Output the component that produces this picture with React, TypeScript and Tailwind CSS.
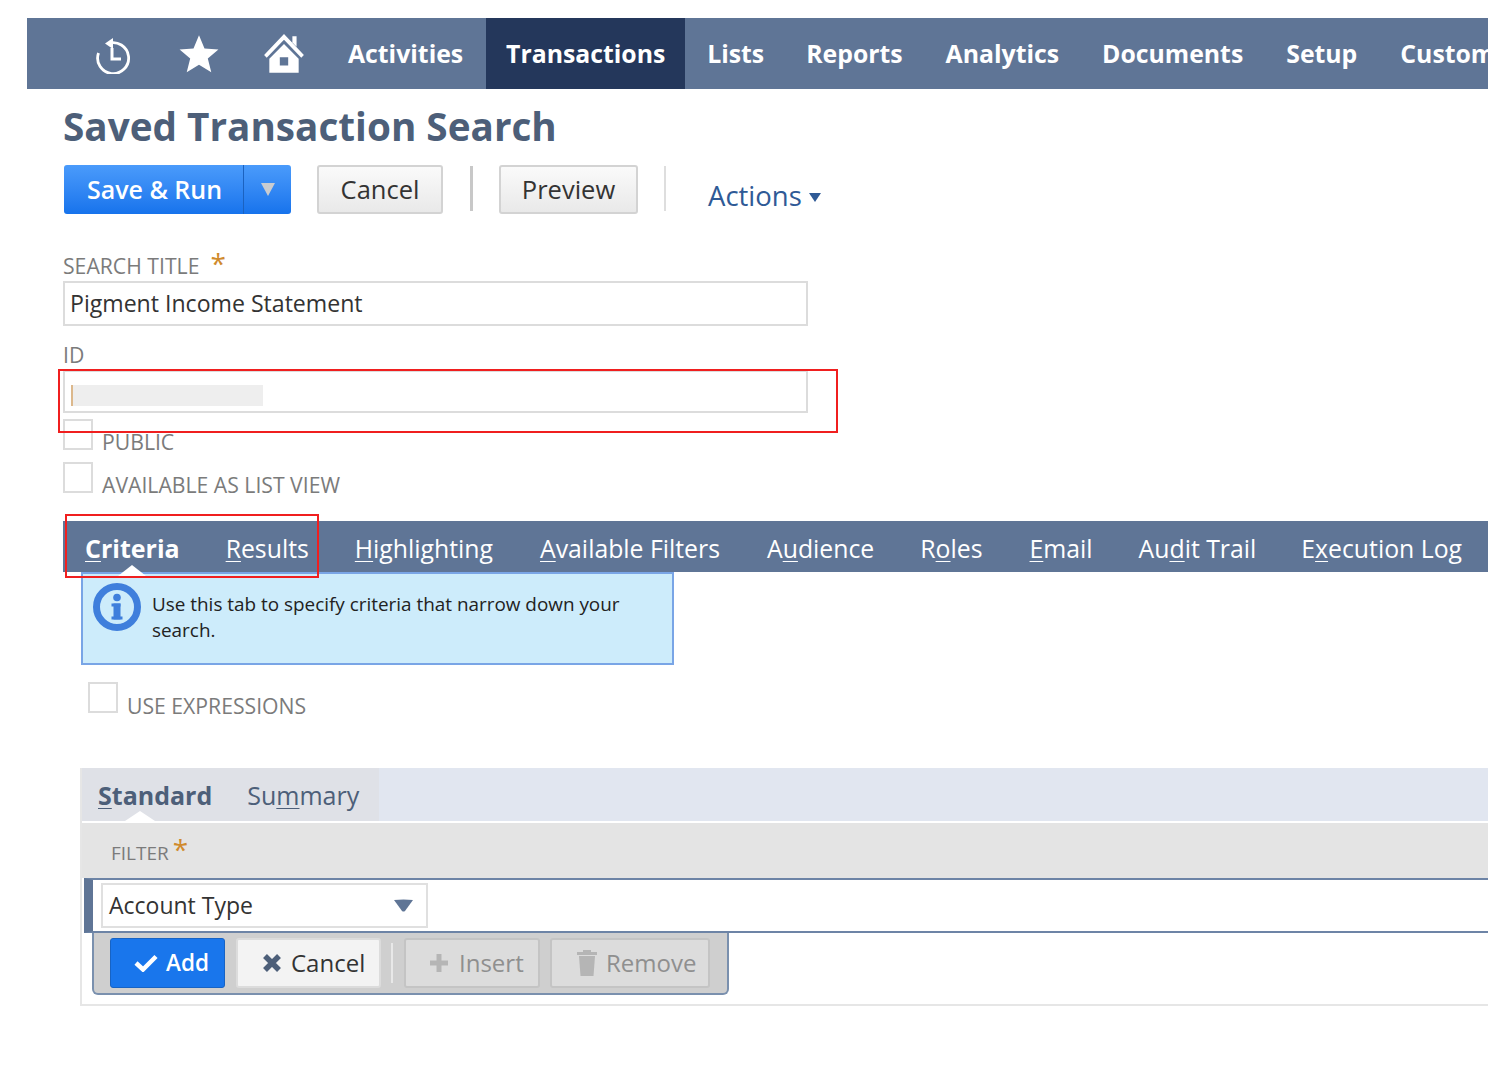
import React from "react";

function U({ children }: { children: React.ReactNode }) {
  return <span className="underline underline-offset-[3px] decoration-1">{children}</span>;
}

function Check({ label, top = "mt-[9px]" }: { label: string; top?: string }) {
  return (
    <div className="flex items-start h-[32px]">
      <div className="w-[30px] h-[31px] border-2 border-[#dcdcdc] bg-white" />
      <span className={`ml-[9px] ${top} text-[21.2px] leading-[28px] text-[#7b7b7b] whitespace-nowrap`}>{label}</span>
    </div>
  );
}

function HistoryIcon() {
  return (
    <svg width="40" height="40" viewBox="0 0 40 40" fill="none" stroke="white">
      <path d="M15 9.5 A15.5 15.5 0 1 1 5.5 19" strokeWidth="2.8" />
      <path d="M12 9.5 L20 4 L20 15 Z" fill="white" stroke="none" />
      <path d="M19 14 V25 H28" strokeWidth="3" />
    </svg>
  );
}

function HomeIcon() {
  return (
    <svg width="44" height="42" viewBox="0 0 42 40" fill="white">
      <path d="M21 1 L40 21 L37.5 23.5 L21 6.5 L4.5 23.5 L2 21 Z" />
      <path d="M29 3 H33 V13 L29 9 Z" />
      <path fillRule="evenodd" d="M21 10.5 L35 24.5 V38 H7 V24.5 Z M17 23 V31 H25 V23 Z" />
    </svg>
  );
}

export default function App() {
  const nav = ["Lists", "Reports", "Analytics", "Documents", "Setup", "Customization"];
  const navGaps = ["ml-[22px]", "ml-[42px]", "ml-[43px]", "ml-[43px]", "ml-[43px]", "ml-[43px]"];
  return (
    <div className="relative w-[1488px] h-[1084px] overflow-hidden bg-white font-['Open_Sans',sans-serif] pt-[18px]">
      {/* top nav */}
      <div className="ml-[27px] h-[71px] w-[1461px] bg-[#5f7596] flex items-center text-white font-bold text-[24.8px] whitespace-nowrap">
        <div className="ml-[66px] w-[40px] flex shrink-0"><HistoryIcon /></div>
        <svg className="ml-[44px] shrink-0" width="44" height="44" viewBox="0 0 24 24" fill="white">
          <path d="M12 1.8 L15 9 L22.6 9.5 L16.8 14.5 L18.7 22 L12 17.9 L5.3 22 L7.2 14.5 L1.4 9.5 L9 9 Z" />
        </svg>
        <div className="ml-[41px] flex shrink-0"><HomeIcon /></div>
        <span className="ml-[42px] shrink-0">Activities</span>
        <div className="ml-[23px] h-full w-[199px] shrink-0 bg-[#24375b] flex items-center justify-center">Transactions</div>
        {nav.map((n, i) => (
          <span key={n} className={`${navGaps[i]} shrink-0`}>{n}</span>
        ))}
      </div>

      <div className="pl-[63px]">
        <h1 className="mt-[12px] h-[50px] text-[38.7px] leading-[50px] font-bold text-[#4d5f79] whitespace-nowrap">Saved Transaction Search</h1>

        {/* action bar */}
        <div className="mt-[14px] flex items-start">
          <div className="ml-px flex h-[49px] w-[227px] rounded-[3px] bg-gradient-to-b from-[#4a9bfb] to-[#1673ec] text-white font-semibold text-[25px]">
            <div className="w-[180px] pl-[2px] flex items-center justify-center border-r border-[#1b62c0]">Save &amp; Run</div>
            <div className="flex-1 flex items-center justify-center">
              <svg width="14" height="13" viewBox="0 0 14 13"><path d="M0 0 H14 L7 13 Z" fill="#c9ccd0" /></svg>
            </div>
          </div>
          <button className="ml-[26px] h-[49px] w-[126px] rounded-[3px] border-2 border-[#d3d3d3] bg-gradient-to-b from-[#fafafa] to-[#e9e9e9] text-[25.5px] text-[#333]">Cancel</button>
          <div className="ml-[27px] mt-[1px] w-[3px] h-[45px] bg-[#c8c8c8]" />
          <button className="ml-[26px] h-[49px] w-[139px] rounded-[3px] border-2 border-[#d3d3d3] bg-gradient-to-b from-[#fafafa] to-[#e9e9e9] text-[25.5px] text-[#333]">Preview</button>
          <div className="ml-[26px] mt-[1px] w-[2px] h-[45px] bg-[#dedede]" />
          <div className="ml-[42px] mt-[12px] flex items-center text-[27.5px] leading-[38px] text-[#2f5a96]">
            Actions
            <svg className="ml-[7px] mt-[3px]" width="12" height="9" viewBox="0 0 12 9"><path d="M0 0 H12 L6 9 Z" fill="#2f5a96" /></svg>
          </div>
        </div>

        {/* fields */}
        <div className="mt-[36px] h-[30px] text-[21.2px] leading-[30px] text-[#7b7b7b] whitespace-nowrap flex">
          SEARCH TITLE
          <span className="ml-[11px] -mt-[3px] text-[28px] text-[#d08a2c]">*</span>
        </div>
        <div className="w-[745px] h-[45px] border-2 border-[#dcdcdc] flex items-center px-[5px] text-[23.1px] text-[#333] whitespace-nowrap">Pigment Income Statement</div>
        <div className="mt-[14px] h-[30px] text-[21.2px] leading-[29px] text-[#7b7b7b]">ID</div>
        <div className="w-[745px] h-[43px] border-2 border-[#dcdcdc] flex items-center pl-[6px] pt-[7px]">
          <div className="w-[2px] h-[21px] bg-[#dcb88c]" />
          <div className="w-[190px] h-[21px] bg-[#eeeeee]" />
        </div>

        <div className="mt-[6px]"><Check label="PUBLIC" /></div>
        <div className="mt-[11px]"><Check label="AVAILABLE AS LIST VIEW" /></div>
      </div>

      {/* tabs */}
      <div className="ml-[63px] mt-[27px] h-[51px] pt-[4px] bg-[#5f7596] flex items-center text-white text-[24.8px] whitespace-nowrap">
        <span className="relative ml-[22px] font-bold text-[25px]">
          <U>C</U>riteria
          <svg className="absolute left-[33px] -bottom-[9px]" width="28" height="11" viewBox="0 0 28 11"><path d="M0 11 L14 0 L28 11 Z" fill="white" /></svg>
        </span>
        <span className="ml-[46px]"><U>R</U>esults</span>
        <span className="ml-[46px]"><U>H</U>ighlighting</span>
        <span className="ml-[47px]"><U>A</U>vailable Filters</span>
        <span className="ml-[47px]">A<U>u</U>dience</span>
        <span className="ml-[46px]">R<U>o</U>les</span>
        <span className="ml-[47px]"><U>E</U>mail</span>
        <span className="ml-[46px]">Au<U>d</U>it Trail</span>
        <span className="ml-[45px]">E<U>x</U>ecution Log</span>
      </div>

      <div className="ml-[81px]">
        {/* info */}
        <div className="w-[593px] h-[93px] border-2 border-[#79a5e6] bg-[#cdecfb] flex items-start">
          <svg className="ml-[9px] mt-[8px] shrink-0" width="50" height="50" viewBox="0 0 50 50">
            <circle cx="25" cy="25" r="20.5" fill="none" stroke="#3f7fdc" strokeWidth="7" />
            <circle cx="25" cy="15.5" r="3.8" fill="#3f7fdc" />
            <rect x="21.5" y="21.5" width="7" height="16" fill="#3f7fdc" />
            <rect x="19.5" y="21.5" width="9" height="3" fill="#3f7fdc" />
            <rect x="19.5" y="34.5" width="11" height="3" fill="#3f7fdc" />
          </svg>
          <p className="ml-[10px] mt-[17px] w-[490px] text-[18.9px] leading-[26px] text-[#222]">Use this tab to specify criteria that narrow down your search.</p>
        </div>

        <div className="ml-[7px] mt-[17px]"><Check label="USE EXPRESSIONS" top="mt-[10px]" /></div>

        {/* sublist */}
        <div className="mt-[54px] h-[238px] border-l-2 border-b-2 border-[#e6e6e6] -ml-px">
          <div className="h-[53px] bg-[#e1e6f0] flex">
            <div className="relative w-[297px] h-full pt-[3px] bg-[#dfe1e7] flex items-center text-[25px] text-[#4d5f79] whitespace-nowrap">
              <span className="ml-[16px] font-bold"><U>S</U>tandard</span>
              <span className="ml-[35px]">Su<U>m</U>mary</span>
              <svg className="absolute left-[43px] bottom-0" width="30" height="10" viewBox="0 0 30 10"><path d="M0 10 L15 0 L30 10 Z" fill="white" /></svg>
            </div>
          </div>
          <div className="mt-[2px] h-[55px] bg-[#e4e4e4] flex items-start text-[19px] text-[#7b7b7b]">
            <span className="ml-[29px] mt-[16px] leading-[28px]">FILTER</span>
            <span className="ml-[4px] mt-[10px] leading-[32px] text-[28px] text-[#d08a2c]">*</span>
          </div>
          <div className="h-[55px] border-y-2 border-[#6d84a6] border-l-[9px] border-l-[#5f7596] ml-[2px] bg-white pl-[8px] pt-[3px]">
            <div className="w-[327px] h-[45px] border-2 border-[#e0e0e0] flex items-center justify-between pl-[6px] pr-[12px] text-[23px] text-[#333]">
              Account Type
              <svg width="21" height="13" viewBox="0 0 21 13"><path d="M1 1 Q10.5 0 20 1 L12 12 Q10.5 13 9 12 Z" fill="#5f7596" /></svg>
            </div>
          </div>
          <div className="ml-[10px] w-[637px] h-[62px] rounded-b-[6px] border-2 border-t-0 border-[#7a90ae] bg-[#cfcfcf] flex items-center pl-[16px]">
            <button className="w-[115px] h-[50px] pl-[23px] rounded-[3px] bg-[#1976ec] border border-[#1763c4] text-white font-semibold text-[22.5px] flex items-center gap-[8px]">
              <svg width="24" height="18" viewBox="0 0 24 18"><path d="M2 9 L9 15.5 L22 2.5" fill="none" stroke="white" strokeWidth="4.5" /></svg>
              Add
            </button>
            <button className="ml-[11px] w-[145px] h-[50px] pl-[24px] rounded-[3px] border-2 border-[#dcdcdc] bg-[#f3f3f3] text-[24px] text-[#333] flex items-center gap-[9px]">
              <svg width="20" height="20" viewBox="0 0 20 20"><path d="M3 3 L17 17 M17 3 L3 17" stroke="#4d5f79" strokeWidth="5.5" /></svg>
              Cancel
            </button>
            <div className="ml-[10px] w-[2px] h-[40px] bg-[#e8e8e8]" />
            <button className="ml-[11px] w-[136px] h-[50px] pl-[23px] rounded-[3px] border-2 border-[#c4c4c4] bg-[#dcdcdc] text-[24px] text-[#8f8f8f] flex items-center gap-[10px]">
              <svg width="20" height="20" viewBox="0 0 20 20"><path d="M10 1 V19 M1 10 H19" stroke="#b5b5b5" strokeWidth="5" /></svg>
              Insert
            </button>
            <button className="ml-[10px] w-[160px] h-[50px] pl-[25px] rounded-[3px] border-2 border-[#c4c4c4] bg-[#dcdcdc] text-[24px] text-[#8f8f8f] flex items-center gap-[9px]">
              <svg width="20" height="26" viewBox="0 0 20 26" fill="#b5b5b5"><path d="M6 0 H14 V2 H20 V5 H0 V2 H6 Z" /><path d="M2 6 H18 L16.5 26 H3.5 Z" /></svg>
              Remove
            </button>
          </div>
        </div>
      </div>

      {/* annotation boxes */}
      <div className="absolute left-[58px] top-[369px] w-[780px] h-[64px] border-2 border-[#f01f1f]" />
      <div className="absolute left-[65px] top-[514px] w-[254px] h-[64px] border-2 border-[#f01f1f]" />
    </div>
  );
}
